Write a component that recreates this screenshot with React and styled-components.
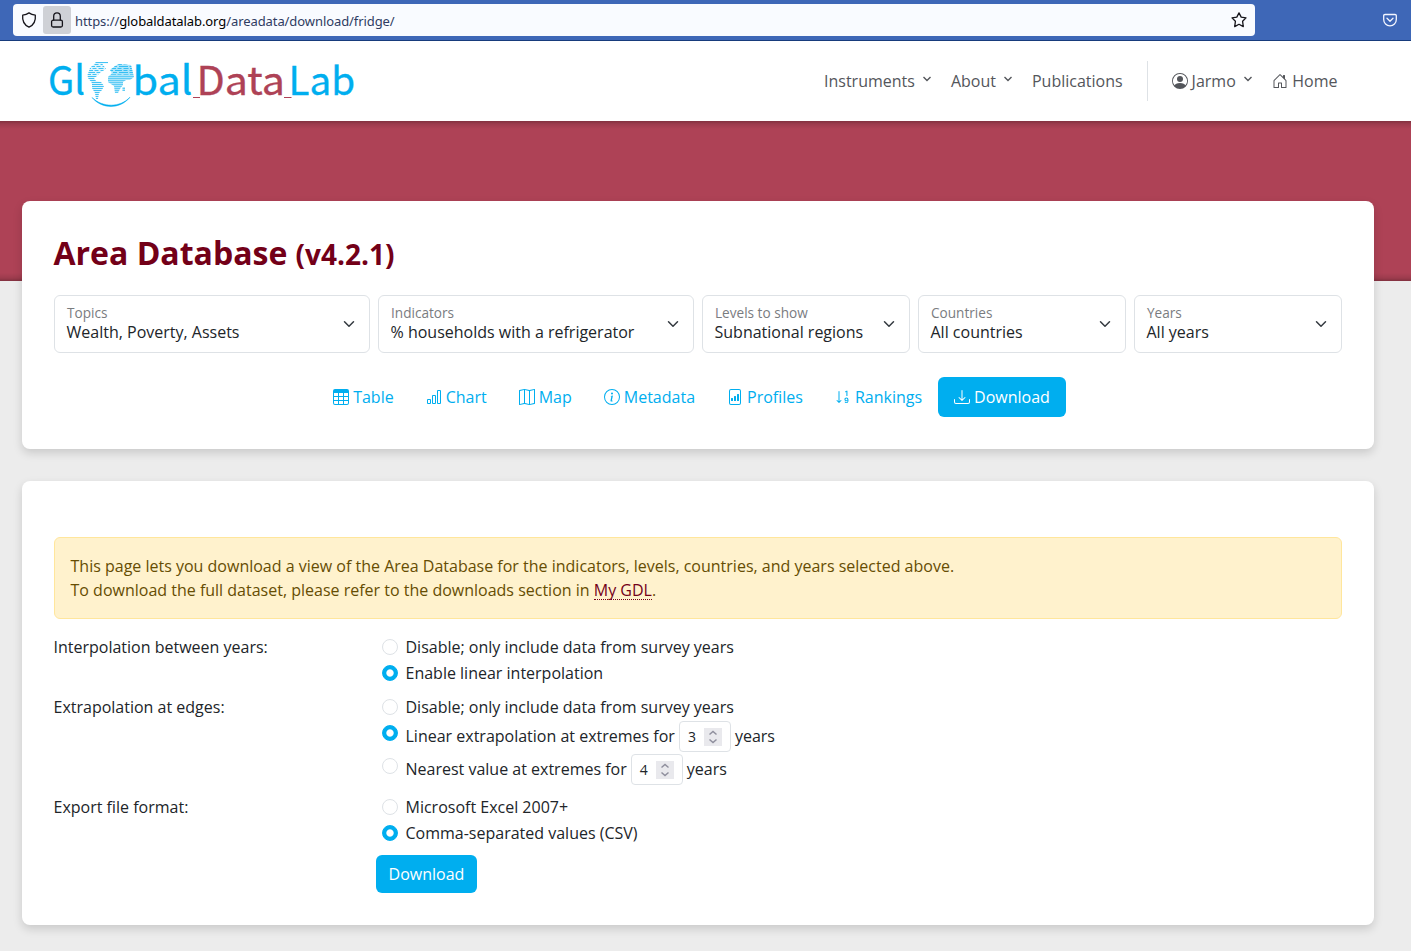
import React from 'react';
import styled, { createGlobalStyle } from 'styled-components';
import {
  BsTable, BsBarChart, BsMap, BsInfoCircle, BsFileBarGraph,
  BsSortNumericDown, BsDownload, BsPersonCircle, BsHouseDoor,
} from 'react-icons/bs';

const GlobalStyle = createGlobalStyle`
  *, *::before, *::after { box-sizing: border-box; }
  body {
    margin: 0;
    background: #ececec;
    color: #212529;
    font: 400 16px/24px "Open Sans", "Noto Sans", sans-serif;
    overflow: hidden;
  }
`;

const Page = styled.div`
  height: 951px;
`;

/* Browser chrome */
const Toolbar = styled.div`
  display: flex;
  align-items: flex-start;
  justify-content: space-between;
  height: 41px;
  padding: 4px 13px 0 13px;
  background: #3e67b7;
  border-bottom: 1px solid #173b7c;
`;
const AddressBar = styled.div`
  display: flex;
  align-items: center;
  width: 1242px;
  height: 32px;
  padding: 0 8px;
  border-radius: 4px;
  background: #f9fbff;
  color: #15141a;
`;
const LockBox = styled.span`
  display: grid;
  place-items: center;
  width: 28px;
  height: 28px;
  margin: 0 4px 0 6px;
  border-radius: 3px;
  background: #cfd1d6;
`;
const Url = styled.span`
  flex: 1;
  font: 13px/18px "Noto Sans", "Open Sans", sans-serif;
  letter-spacing: -0.08px;
  color: #2f3c62;
  padding-top: 1px;
  b { font-weight: 400; color: #000; }
`;
const ToolIcon = styled.svg`
  display: block;
  width: 16px;
  height: 16px;
  flex: none;
  fill: none;
  stroke: currentColor;
  stroke-width: 1.3;
  stroke-linejoin: round;
  stroke-linecap: round;
`;
const PocketButton = styled.span`
  display: flex;
  align-items: center;
  height: 32px;
  color: #f4f6ff;
`;

/* Site header */
const Header = styled.header`
  display: flex;
  align-items: center;
  justify-content: space-between;
  height: 80px;
  padding: 0 73.5px 0 36px;
  background: #fff;
`;
const Logo = styled.svg`
  display: block;
  width: 332px;
  height: 80px;
  overflow: visible;
  font: 400 39.5px "Noto Sans CJK JP", "Noto Sans CJK SC", "Noto Sans", sans-serif;
`;
const LogoText = styled.text`
  fill: ${(p) => p.$color};
  stroke: ${(p) => p.$color};
  stroke-width: 0.35;
`;
const Nav = styled.nav`
  display: flex;
  align-items: center;
  color: #54565b;
`;
const NavLink = styled.a`
  display: flex;
  align-items: center;
  margin-left: ${(p) => p.$gap ?? 20}px;
`;
const NavIcon = styled.span`
  display: flex;
  margin-right: ${(p) => p.$space ?? 4.5}px;
`;
const NavCaret = styled.svg`
  width: 8px;
  height: 6px;
  margin: -4px 0 0 8px;
  fill: none;
  stroke: currentColor;
  stroke-width: 1.4;
`;
const NavDivider = styled.span`
  width: 1px;
  height: 40px;
  margin-left: 24px;
  background: #dee2e6;
`;

const Banner = styled.div`
  height: 160px;
  background:
    linear-gradient(rgba(0, 0, 0, .26), rgba(0, 0, 0, .1) 3px, transparent 8px),
    linear-gradient(0deg, rgba(0, 0, 0, .26), rgba(0, 0, 0, .1) 3px, transparent 8px),
    #ae4256;
`;
const Content = styled.main`
  display: flex;
  flex-direction: column;
  gap: 32px;
  margin: -80px 37px 0 22px;
`;
const Card = styled.section`
  height: ${(p) => p.$height}px;
  padding: ${(p) => p.$top}px 32px 32px;
  border-radius: 8px;
  background: #fff;
  box-shadow: 0 4px 10px rgba(0, 0, 0, .15);
`;
const Title = styled.h1`
  margin: 0 0 22px -0.5px;
  font-size: 32px;
  line-height: 38px;
  font-weight: 700;
  color: #730018;
  small { font-size: 28px; }
`;

const Filters = styled.div`
  display: grid;
  grid-template-columns: repeat(12, 1fr);
  gap: 8px;
`;
const Filter = styled.div`
  grid-column: span ${(p) => p.$span};
  display: flex;
  align-items: center;
  justify-content: space-between;
  height: 58px;
  padding: 0 12px;
  border: 1px solid #dee2e6;
  border-radius: 6px;
`;
const FilterText = styled.div`
  display: flex;
  flex-direction: column;
  margin: 0 0 2px -0.5px;
  color: #212529;
  line-height: 20px;
`;
const FilterLabel = styled.span`
  margin-left: 0.5px;
  font-size: 13.6px;
  line-height: 18px;
  color: #7a7c7f;
`;
const SelectCaret = styled.svg`
  width: 16px;
  height: 12px;
  fill: none;
  stroke: #343a40;
  stroke-width: 2;
  stroke-linecap: round;
  stroke-linejoin: round;
`;

const Tabs = styled.div`
  display: flex;
  justify-content: center;
  margin: 24px 13px 0 0;
`;
const Tab = styled.a`
  display: flex;
  align-items: center;
  gap: 4px;
  height: 40px;
  padding: 0 16px;
  border-radius: 6px;
  color: ${(p) => (p.$active ? '#fff' : '#00aeef')};
  background: ${(p) => (p.$active ? '#00aeef' : 'transparent')};
`;

const Notice = styled.p`
  margin: 0 0 16px;
  padding: 16px 16px 16px 15.5px;
  border: 1px solid #ffe69c;
  border-radius: 6px;
  background: #fff2cd;
  color: #664d03;
  a {
    display: inline-block;
    line-height: 18px;
    color: #730018;
    border-bottom: 1px dotted #730018;
  }
`;
const FormRow = styled.div`
  display: grid;
  grid-template-columns: 322px 1fr;
  margin-bottom: 8px;
`;
const RowLabel = styled.span`
  margin-left: -0.5px;
`;
const Option = styled.label`
  display: flex;
  align-items: flex-start;
  gap: 7.5px;
  margin: 0 0 2px 6px;
`;
const Radio = styled.span`
  width: 16px;
  height: 16px;
  margin-top: 4px;
  flex: none;
  border-radius: 50%;
  border: 1px solid ${(p) => (p.$on ? '#00aeef' : '#dee2e6')};
  background: ${(p) => (p.$on ? 'radial-gradient(circle, #fff 3.2px, #00aeef 4.1px)' : '#fff')};
`;
const OptionText = styled.span`
  display: flex;
  align-items: flex-start;
  gap: 4px;
  height: ${(p) => (p.$tall ? 31 : 24)}px;
  line-height: ${(p) => (p.$tall ? 30 : 24)}px;
`;
const NumberField = styled.span`
  display: flex;
  align-items: center;
  justify-content: space-between;
  width: 52px;
  height: 31px;
  padding: 0 8px;
  border: 1px solid #dee2e6;
  border-radius: 4px;
  font-size: 14px;
`;
const Spinner = styled.svg`
  display: block;
  width: 18px;
  height: 18px;
  background: #e9e9ed;
  fill: none;
  stroke: #8f8f9d;
  stroke-width: 1.5;
`;
const Submit = styled.button`
  grid-column: 2;
  justify-self: start;
  width: 101px;
  height: 38px;
  padding: 0;
  border: 0;
  border-radius: 6px;
  background: #00aeef;
  color: #fff;
  font: inherit;
`;

const BLUE = '#00aeef';
const RED = '#ae4256';

function GlobalDataLabLogo() {
  return (
    <Logo viewBox="36 41 332 80" aria-label="Global Data Lab">
      <defs>
        <clipPath id="americas">
          <path d="M96 62H108V63.5H102L106 69L101 72L97 76L94 78L96 81L101 82L104 86L102 90L99 93L98 99H96L95 93L92 88V83L88 78L87.5 75L90 68Z" />
        </clipPath>
        <clipPath id="oldworld">
          <path d="M115 66L119 64L131 65L134 77L130 80H126L123 82V85L120.5 88L118 93H115L114 86L108 82V77L112 73L110 70ZM122.5 87H125V91H122.5Z" />
        </clipPath>
      </defs>
      <LogoText x="48" y="95" textLength="37" lengthAdjust="spacingAndGlyphs" $color={BLUE}>Gl</LogoText>
      {['americas', 'oldworld'].map((land) => (
        <g key={land} clipPath={`url(#${land})`} stroke={BLUE}>
          <path d="M86 61H136V100H86Z" fill={BLUE} fillOpacity={land === 'americas' ? 0.12 : 0.32} stroke="none" />
          {Array.from({ length: 20 }, (_, i) => (
            <path
              key={i}
              d={`M86 ${62.5 + i * 2}H136`}
              strokeWidth="1"
              strokeOpacity={land === 'oldworld' && i > 5 ? 0.45 : 0.7}
              strokeDasharray={i > 0 && i < 7 ? `${5 + (i % 3) * 2} 1.5 4 2` : undefined}
            />
          ))}
        </g>
      ))}
      <path d="M92 97.5C102 109.5 120 109.5 130 97.2C120 107.6 103 107.9 92 97.5Z" fill={BLUE} stroke={BLUE} strokeWidth=".5" />
      <LogoText x="132.5" y="95" textLength="60" lengthAdjust="spacingAndGlyphs" $color={BLUE}>bal</LogoText>
      <path d="M193 97.5H200M284 97.5H291.5" stroke={RED} strokeWidth="1" />
      <LogoText x="196.5" y="95" textLength="88.5" lengthAdjust="spacingAndGlyphs" $color={RED}>Data</LogoText>
      <LogoText x="288.5" y="95" textLength="66.5" lengthAdjust="spacingAndGlyphs" $color={BLUE}>Lab</LogoText>
    </Logo>
  );
}

const Caret = () => <NavCaret viewBox="0 0 8 6"><path d="M.5 1L4 4.5L7.5 1" /></NavCaret>;

const filters = [
  ['Topics', 'Wealth, Poverty, Assets', 3],
  ['Indicators', '% households with a refrigerator', 3],
  ['Levels to show', 'Subnational regions', 2],
  ['Countries', 'All countries', 2],
  ['Years', 'All years', 2],
];

const tabs = [
  ['Table', BsTable], ['Chart', BsBarChart], ['Map', BsMap], ['Metadata', BsInfoCircle],
  ['Profiles', BsFileBarGraph], ['Rankings', BsSortNumericDown], ['Download', BsDownload],
];

const groups = [
  ['Interpolation between years:', [
    { text: 'Disable; only include data from survey years' },
    { text: 'Enable linear interpolation', on: true },
  ]],
  ['Extrapolation at edges:', [
    { text: 'Disable; only include data from survey years' },
    { text: 'Linear extrapolation at extremes for', on: true, years: 3 },
    { text: 'Nearest value at extremes for', years: 4 },
  ]],
  ['Export file format:', [
    { text: 'Microsoft Excel 2007+' },
    { text: 'Comma-separated values (CSV)', on: true },
  ]],
];

export default function App() {
  return (
    <Page>
      <GlobalStyle />
      <Toolbar>
        <AddressBar>
          <ToolIcon viewBox="0 0 16 16"><path d="M8 .9C10 2.3 12 2.9 14.3 3.2C14.9 8.5 12.5 13 8 15.2C3.5 13 1.1 8.5 1.7 3.2C4 2.9 6 2.3 8 .9Z" /></ToolIcon>
          <LockBox>
            <ToolIcon viewBox="0 0 16 16"><rect x="2.6" y="8.2" width="10.8" height="6.8" rx="1.5" /><path d="M4.7 8V4.2A3.3 3.3 0 0 1 11.3 4.2V8" /></ToolIcon>
          </LockBox>
          <Url>https://<b>globaldatalab.org</b>/areadata/download/fridge/</Url>
          <ToolIcon viewBox="0 0 16 16"><path d="M8 .9L10.2 5.1L15 5.9L11.6 9.3L12.3 14.6L8 12.3L3.7 14.6L4.4 9.3L1 5.9L5.8 5.1Z" /></ToolIcon>
        </AddressBar>
        <PocketButton>
          <ToolIcon viewBox="0 0 16 16"><path d="M3 2.5H13Q14.3 2.5 14.3 3.6V7.5C14.3 11.3 11.5 13.8 8 13.8S1.7 11.3 1.7 7.5V3.6Q1.7 2.5 3 2.5ZM5 6.3L8 9.2L11 6.3" /></ToolIcon>
        </PocketButton>
      </Toolbar>

      <Header>
        <GlobalDataLabLogo />
        <Nav>
          <NavLink>Instruments<Caret /></NavLink>
          <NavLink>About<Caret /></NavLink>
          <NavLink>Publications</NavLink>
          <NavDivider />
          <NavLink $gap={24}><NavIcon $space={4}><BsPersonCircle size={16} /></NavIcon>Jarmo<Caret /></NavLink>
          <NavLink><NavIcon><BsHouseDoor size={16} /></NavIcon>Home</NavLink>
        </Nav>
      </Header>
      <Banner />

      <Content>
        <Card $height={248} $top={33}>
          <Title>Area Database <small>(v4.2.1)</small></Title>
          <Filters>
            {filters.map(([label, value, span]) => (
              <Filter key={label} $span={span}>
                <FilterText><FilterLabel>{label}</FilterLabel>{value}</FilterText>
                <SelectCaret viewBox="0 0 16 16"><path d="m2 5 6 6 6-6" /></SelectCaret>
              </Filter>
            ))}
          </Filters>
          <Tabs>
            {tabs.map(([label, Icon]) => (
              <Tab key={label} $active={label === 'Download'}><Icon size={16} />{label}</Tab>
            ))}
          </Tabs>
        </Card>

        <Card $height={444} $top={56}>
          <Notice>
            This page lets you download a view of the Area Database for the indicators, levels, countries, and years selected above.<br />
            To download the full dataset, please refer to the downloads section in <a>My GDL</a>.
          </Notice>
          {groups.map(([label, options]) => (
            <FormRow key={label}>
              <RowLabel>{label}</RowLabel>
              <div>
                {options.map(({ text, on, years }) => (
                  <Option key={text}>
                    <Radio $on={on} />
                    <OptionText $tall={Boolean(years)}>
                      {text}
                      {years && (
                        <>
                          <NumberField>
                            {years}
                            <Spinner viewBox="0 0 18 18"><path d="M5.5 6.5L9 3.5L12.5 6.5M5.5 11.5L9 14.5L12.5 11.5" /></Spinner>
                          </NumberField>
                          years
                        </>
                      )}
                    </OptionText>
                  </Option>
                ))}
              </div>
            </FormRow>
          ))}
          <FormRow><Submit>Download</Submit></FormRow>
        </Card>
      </Content>
    </Page>
  );
}
